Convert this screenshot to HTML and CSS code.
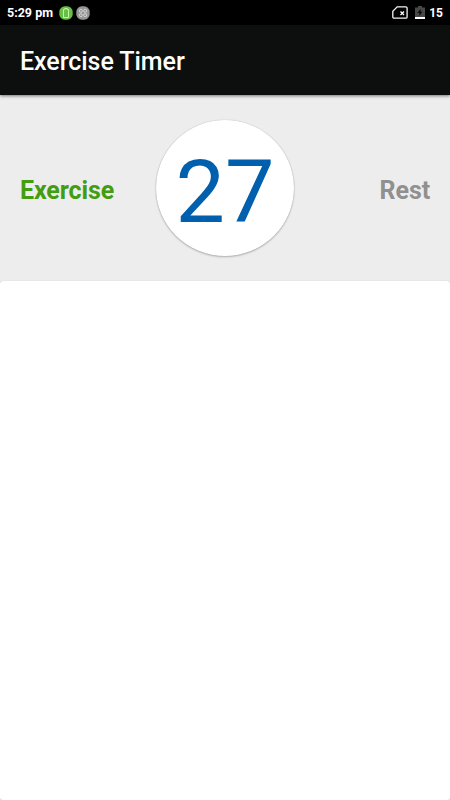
FILE: index.html
```html
<!DOCTYPE html>
<html lang="en">
<head>
<meta charset="utf-8">
<title>Exercise Timer</title>
<link rel="stylesheet" href="styles.css">
</head>
<body>
<div class="status">
  <span class="time">5:29 pm</span>
  <svg class="app-icon" width="14" height="14" viewBox="0 0 14 14"><rect x=".3" y=".3" width="13.4" height="13.4" rx="5.5" fill="#68bf45"/><path d="M4.5 3.5h1.300v-1h2.400v1h1.300v8h-5z" fill="none" stroke="#c4f5a8"/></svg>
  <svg class="app-icon" width="14" height="14" viewBox="0 0 14 14"><rect x=".3" y=".3" width="13.4" height="13.4" rx="5.5" fill="#969696"/><g fill="none" stroke="#d6d6d6"><circle cx="4.8" cy="4.8" r="1.5"/><circle cx="9.2" cy="4.8" r="1.5"/><circle cx="4.8" cy="9.2" r="1.5"/><circle cx="9.2" cy="9.2" r="1.5"/></g></svg>
  <span class="spacer"></span>
  <svg class="sim" width="16" height="13" viewBox="0 0 16 13"><path d="M5.200.8h8.600q1.300 0 1.300 1.300v8.800q0 1.300-1.300 1.300H2.100Q.8 12.200.8 10.900V5.200z" fill="none" stroke="#f4f4f4" stroke-width="1.300"/><path d="M8.500 5.500l3.500 3.500m0-3.500L8.500 9" stroke="#fff" stroke-width="1.300"/></svg>
  <svg class="battery" width="10" height="13" viewBox="0 0 10 13"><path d="M0 1.500h3V0h4v1.500h3V11H0z" fill="#484848"/><path d="M0 11h10v2H0z" fill="#fff"/><path d="M5.700 2.800L2.500 7h2l-.3 3L7.500 5.800h-2z" fill="#080808"/></svg>
  <span class="level">15</span>
</div>
<header class="bar"><h1>Exercise Timer</h1></header>
<main class="timer">
  <span class="phase active">Exercise</span>
  <div class="dial"><span>27</span></div>
  <span class="phase rest">Rest</span>
</main>
<section class="panel"></section>
</body>
</html>
```

FILE: styles.css
```css
* { box-sizing: border-box; }
body {
  margin: 0;
  height: 800px;
  display: flex;
  flex-direction: column;
  overflow: hidden;
  background: #ededed;
  font-family: Roboto, sans-serif;
}
.status {
  height: 25px;
  flex: none;
  display: flex;
  align-items: center;
  padding: 0 8px 0 7px;
  background: #000;
  color: #fff;
  font-size: 12.5px;
  font-weight: 700;
}
.time { margin-right: 6px; }
.app-icon { margin-right: 3px; }
.spacer { flex: 1; }
.sim { margin-right: 7px; }
.battery { margin-right: 4px; }
.level { font-size: 12px; margin-right: -1px; }
.bar {
  height: 70px;
  flex: none;
  display: flex;
  align-items: center;
  padding: 2px 20px 0;
  background: #0c0f0e;
  box-shadow: 0 1px 3px rgba(0, 0, 0, .5);
}
h1 {
  margin: 0;
  color: #fff;
  font-size: 25px;
  letter-spacing: -.05px;
  font-weight: 500;
}
.timer {
  height: 186px;
  flex: none;
  display: grid;
  grid-template-columns: 1fr 138px 1fr;
  align-items: center;
  padding: 1px 20px 0;
}
.phase {
  font-size: 25px;
  letter-spacing: -.1px;
  font-weight: 700;
  padding-top: 4px;
}
.active { color: #439d10; }
.rest { color: #909090; text-align: right; }
.dial {
  height: 136px;
  margin-bottom: 1px;
  border-radius: 50%;
  display: flex;
  align-items: center;
  justify-content: center;
  background: #fff;
  color: #0060ad;
  font-size: 88px;
  line-height: 1;
  padding-top: 8px;
  box-shadow: 0 0 1px rgba(0, 0, 0, .25), 0 1px 2px rgba(0, 0, 0, .25);
}
.panel {
  flex: 1;
  border-radius: 3px;
  background: #fff;
  box-shadow: 0 0 1px rgba(0, 0, 0, .25);
}
```
